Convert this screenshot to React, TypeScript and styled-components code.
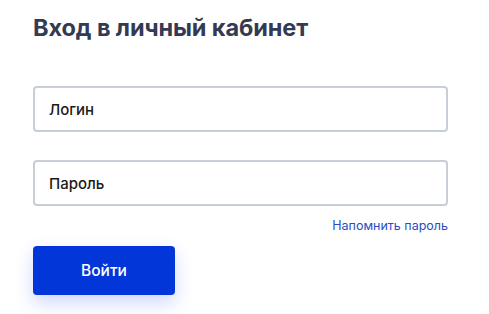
import styled, { createGlobalStyle } from 'styled-components'

const GlobalStyle = createGlobalStyle`
  html, body {
    margin: 0;
    padding: 0;
    background: #fff;
    font-family: Inter, 'Noto Sans', sans-serif;
  }
`

const Page = styled.div`
  width: 489px;
  height: 314px;
  box-sizing: border-box;
  padding: 13px 41px 0 33px;
`

const Title = styled.h1`
  margin: 0;
  font-size: 23.5px;
  line-height: 30px;
  font-weight: 700;
  color: #343a52;
  letter-spacing: -0.1px;
`

const Form = styled.form`
  display: flex;
  flex-direction: column;
  margin-top: 43px;
`

const Field = styled.input<{ $gap?: number }>`
  box-sizing: border-box;
  width: 100%;
  height: 46px;
  margin-top: ${({ $gap }) => $gap ?? 0}px;
  padding: 0 14px;
  border: 2px solid #c8ced6;
  border-radius: 4px;
  font-family: inherit;
  font-size: 15px;
  font-weight: 500;
  color: #1a1a1a;
  outline: none;
  &::placeholder {
    color: #1a1a1a;
  }
`

const Hint = styled.a`
  align-self: flex-end;
  margin-top: 12px;
  font-size: 12.5px;
  line-height: 16px;
  color: #2a4cc4;
  text-decoration: none;
`

const Submit = styled.button`
  align-self: flex-start;
  width: 142px;
  height: 49px;
  margin-top: 12px;
  border: 0;
  border-radius: 4px;
  background: #0336d9;
  color: #fff;
  font-family: inherit;
  font-size: 15.5px;
  font-weight: 500;
  box-shadow: 0 8px 18px rgba(40, 80, 240, 0.22);
`

const App = () => {
  return (
    <>
      <GlobalStyle />
      <Page>
        <Title>Вход в личный кабинет</Title>
        <Form onSubmit={(e) => e.preventDefault()}>
          <Field placeholder='Логин' />
          <Field $gap={28} type='password' placeholder='Пароль' />
          <Hint href='#'>Напомнить пароль</Hint>
          <Submit type='submit'>Войти</Submit>
        </Form>
      </Page>
    </>
  )
}

export default App
